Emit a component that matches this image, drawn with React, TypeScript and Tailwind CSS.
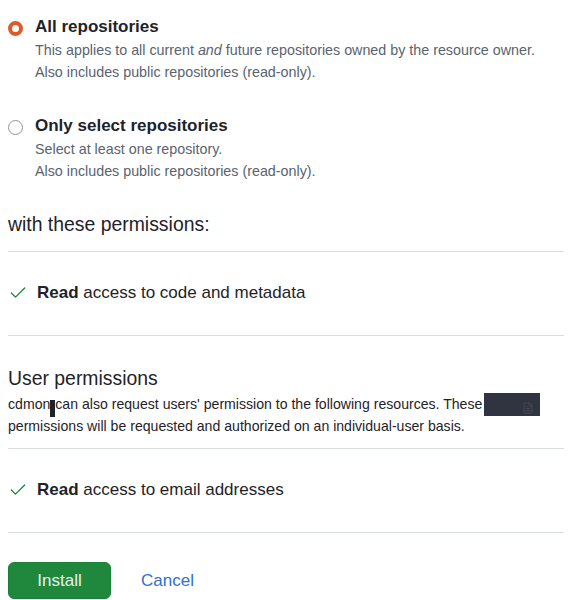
import { Check, FileText } from 'lucide-react'

type Option = {
  title: string
  lines: React.ReactNode[]
  selected: boolean
}

const options: Option[] = [
  {
    title: 'All repositories',
    lines: [
      <>
        This applies to all current <em>and</em> future repositories owned by the resource owner.
      </>,
      'Also includes public repositories (read-only).',
    ],
    selected: true,
  },
  {
    title: 'Only select repositories',
    lines: ['Select at least one repository.', 'Also includes public repositories (read-only).'],
    selected: false,
  },
]

function Radio({ selected }: { selected: boolean }) {
  if (selected) {
    return <span className="block w-[15px] h-[15px] rounded-full border-[4px] border-[#de5b29] bg-white" />
  }
  return <span className="block w-[15px] h-[15px] rounded-full border border-[#8c959f] bg-white" />
}

function PermissionRow({ text }: { text: string }) {
  return (
    <div className="flex items-center gap-[9px] pt-[29px] pb-[31px] border-b border-[#d8dee4]">
      <Check className="w-[20px] h-[20px] text-[#1a7f37]" strokeWidth={1.5} />
      <p className="text-[17px] leading-[23px] text-[#1f2328]">
        <strong className="font-bold">Read</strong> {text}
      </p>
    </div>
  )
}

export default function App() {
  return (
    <div
      className="w-[572px] h-[600px] bg-white px-2 overflow-hidden text-[#1f2328]"
      style={{ fontFamily: '"Liberation Sans", Arial, sans-serif' }}
    >
      <div className="flex flex-col gap-[31px] pt-[15px]">
        {options.map((o) => (
          <div key={o.title} className="flex gap-[12px]">
            <div className="pt-[6px] w-[15px] shrink-0">
              <Radio selected={o.selected} />
            </div>
            <div>
              <h3 className="text-[17px] leading-[24px] font-bold text-[#1f2328]">{o.title}</h3>
              {o.lines.map((l, i) => (
                <p key={i} className="text-[14.3px] leading-[22px] text-[#59636e]">
                  {l}
                </p>
              ))}
            </div>
          </div>
        ))}
      </div>

      <h2 className="mt-[27px] text-[19.4px] leading-[30px] pb-[12px] border-b border-[#d8dee4]">
        with these permissions:
      </h2>
      <PermissionRow text="access to code and metadata" />

      <h2 className="mt-[27px] text-[19.4px] leading-[30px]">User permissions</h2>
      <p className="text-[14.1px] leading-[22px] pb-[11px] border-b border-[#d8dee4]">
        cdmon
        <span className="inline-block w-[5px] h-[17px] -my-[4px] bg-[#1f2328] align-[-4px]" />
        can also request users' permission to the following resources. These
        <span className="inline-flex items-end justify-end w-[56px] h-[23px] -my-[4px] ml-[2px] bg-[#2f3440] align-[-6px] pr-[6px] pb-[1px]">
          <FileText className="w-[12px] h-[14px] text-[#4a505c]" strokeWidth={1.5} />
        </span>{' '}
        permissions will be requested and authorized on an individual-user basis.
      </p>
      <PermissionRow text="access to email addresses" />

      <div className="flex items-center gap-[30px] mt-[29px]">
        <button className="w-[103px] h-[37px] rounded-md bg-[#1f883d] border border-[#1a7f37] text-[17px] text-[#e6f4ea]">
          Install
        </button>
        <a className="text-[17px] text-[#2f6fd0]">Cancel</a>
      </div>
    </div>
  )
}
